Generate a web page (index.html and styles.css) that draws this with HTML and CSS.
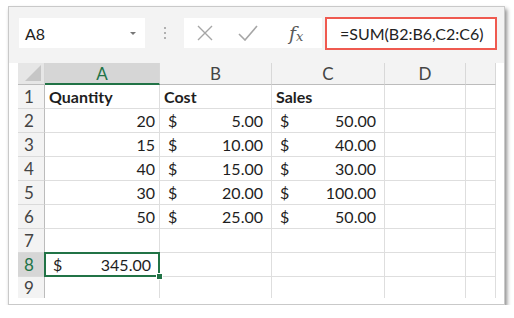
FILE: index.html
```html
<!DOCTYPE html>
<html>
    <head>
        <meta charset="utf-8">
        <title>Sheet</title>
        <link rel="stylesheet" href="styles.css">
    </head>
    <body>
        <div class="window">
            <div class="toolbar">
                <div class="nameBox">
                    <span>A8</span>
                    <span class="caret"></span>
                </div>
                <div class="grip"><i></i><i></i><i></i></div>
                <div class="fxBox">
                    <svg class="icon" width="18" height="16" viewBox="0 0 18 16">
                        <path d="M2 1 L16 15 M16 1 L2 15" stroke="#a6a6a6" stroke-width="1.4" fill="none"/>
                    </svg>
                    <svg class="icon" width="20" height="16" viewBox="0 0 20 16">
                        <path d="M1 9 L7 15 L19 1" stroke="#a6a6a6" stroke-width="1.6" fill="none"/>
                    </svg>
                    <span class="fx">f<sub>x</sub></span>
                </div>
                <div class="formula">=SUM(B2:B6,C2:C6)</div>
            </div>
            <div class="sheet">
                <div class="corner"></div>
                <div class="colHead active">A</div>
                <div class="colHead">B</div>
                <div class="colHead">C</div>
                <div class="colHead">D</div>
                <div class="colHead"></div>

                <div class="rowHead">1</div>
                <div class="cell bold">Quantity</div>
                <div class="cell bold">Cost</div>
                <div class="cell bold">Sales</div>
                <div class="cell"></div>
                <div class="cell"></div>

                <div class="rowHead">2</div>
                <div class="cell num">20</div>
                <div class="cell money"><span>$</span><span>5.00</span></div>
                <div class="cell money"><span>$</span><span>50.00</span></div>
                <div class="cell"></div>
                <div class="cell"></div>

                <div class="rowHead">3</div>
                <div class="cell num">15</div>
                <div class="cell money"><span>$</span><span>10.00</span></div>
                <div class="cell money"><span>$</span><span>40.00</span></div>
                <div class="cell"></div>
                <div class="cell"></div>

                <div class="rowHead">4</div>
                <div class="cell num">40</div>
                <div class="cell money"><span>$</span><span>15.00</span></div>
                <div class="cell money"><span>$</span><span>30.00</span></div>
                <div class="cell"></div>
                <div class="cell"></div>

                <div class="rowHead">5</div>
                <div class="cell num">30</div>
                <div class="cell money"><span>$</span><span>20.00</span></div>
                <div class="cell money"><span>$</span><span>100.00</span></div>
                <div class="cell"></div>
                <div class="cell"></div>

                <div class="rowHead">6</div>
                <div class="cell num">50</div>
                <div class="cell money"><span>$</span><span>25.00</span></div>
                <div class="cell money"><span>$</span><span>50.00</span></div>
                <div class="cell"></div>
                <div class="cell"></div>

                <div class="rowHead">7</div>
                <div class="cell"></div>
                <div class="cell"></div>
                <div class="cell"></div>
                <div class="cell"></div>
                <div class="cell"></div>

                <div class="rowHead active">8</div>
                <div class="cell money selected"><span>$</span><span>345.00</span></div>
                <div class="cell"></div>
                <div class="cell"></div>
                <div class="cell"></div>
                <div class="cell"></div>

                <div class="rowHead last">9</div>
                <div class="cell last"></div>
                <div class="cell last"></div>
                <div class="cell last"></div>
                <div class="cell last"></div>
                <div class="cell last"></div>
            </div>
        </div>
    </body>
</html>
```

FILE: styles.css
```css
body {
    margin: 0;
    background: white;
    font-family: "Lato", "Open Sans", sans-serif;
}
.window {
    margin: 6px 0 0 8px;
    width: 497px;
    height: 299px;
    box-sizing: border-box;
    border: 1px solid #c9c9c9;
    background: white;
    box-shadow: 2px 3px 4px rgba(0, 0, 0, 0.45);
    overflow: hidden;
}
.toolbar {
    display: flex;
    align-items: center;
    height: 56px;
    box-sizing: border-box;
    padding: 11px 0 15px 10px;
    background: #f3f3f3;
}
.nameBox {
    display: flex;
    align-items: center;
    justify-content: space-between;
    width: 126px;
    height: 30px;
    box-sizing: border-box;
    padding: 0 9px 0 6px;
    background: white;
    font-size: 16px;
    color: #222;
}
.caret {
    width: 0;
    height: 0;
    border-left: 3px solid transparent;
    border-right: 3px solid transparent;
    border-top: 3px solid #777;
}
.grip {
    display: flex;
    flex-direction: column;
    gap: 3px;
    margin: 0 18px 0 19px;
}
.grip i {
    width: 2px;
    height: 2px;
    background: #b0b0b0;
}
.fxBox {
    display: flex;
    align-items: center;
    width: 138px;
    height: 30px;
    box-sizing: border-box;
    padding-left: 12px;
    background: white;
}
.icon {
    margin-right: 24px;
}
.fx {
    margin-left: 7px;
    font-family: "DejaVu Serif", serif;
    font-style: italic;
    font-size: 19px;
    color: #5a5a5a;
}
.fx sub {
    font-size: 13px;
    vertical-align: -1px;
}
.formula {
    display: flex;
    align-items: center;
    width: 172px;
    height: 33px;
    box-sizing: border-box;
    margin-left: 3px;
    padding-left: 13px;
    border: 2px solid #ef5a50;
    background: white;
    font-size: 16px;
    color: #222;
}
.sheet {
    display: grid;
    grid-template-columns: 27px 115px 112px 113px 81px 30px;
    grid-template-rows: 22px repeat(8, 24px) 21px;
    margin-left: 9px;
    font-size: 16px;
    color: #1e1e1e;
}
.corner {
    position: relative;
    background: #e6e6e6;
    border-right: 1px solid #d4d4d4;
    border-bottom: 1px solid #bcbcbc;
}
.corner::after {
    content: "";
    position: absolute;
    right: 3px;
    bottom: 3px;
    width: 0;
    height: 0;
    border-left: 16px solid transparent;
    border-bottom: 16px solid #c6c6c6;
}
.colHead {
    display: flex;
    align-items: center;
    justify-content: center;
    background: #f3f3f3;
    border-right: 1px solid #d8d8d8;
    border-bottom: 1px solid #bcbcbc;
    color: #444;
    font-size: 17px;
}
.colHead.active {
    background: #d6d6d6;
    border-bottom: 2px solid #217346;
    color: #217346;
}
.rowHead {
    display: flex;
    align-items: center;
    padding-left: 6px;
    background: #f3f3f3;
    border-right: 1px solid #bcbcbc;
    border-bottom: 1px solid #dadada;
    color: #444;
    font-size: 17px;
}
.rowHead.active {
    background: #d6d6d6;
    color: #217346;
}
.cell {
    display: flex;
    align-items: center;
    box-sizing: border-box;
    padding: 0 4px;
    border-right: 1px solid #dedede;
    border-bottom: 1px solid #dedede;
}
.last {
    border-bottom: none;
}
.bold {
    font-weight: bold;
}
.num {
    justify-content: flex-end;
}
.money {
    justify-content: space-between;
    padding: 0 8px 0 8px;
}
.selected {
    position: relative;
}
.selected::after {
    content: "";
    position: absolute;
    left: -1px;
    top: -1px;
    right: -1px;
    bottom: -1px;
    border: 2px solid #217346;
}
.selected::before {
    content: "";
    position: absolute;
    right: -4px;
    bottom: -4px;
    width: 5px;
    height: 5px;
    background: #217346;
    border: 1px solid white;
    z-index: 1;
}
```
